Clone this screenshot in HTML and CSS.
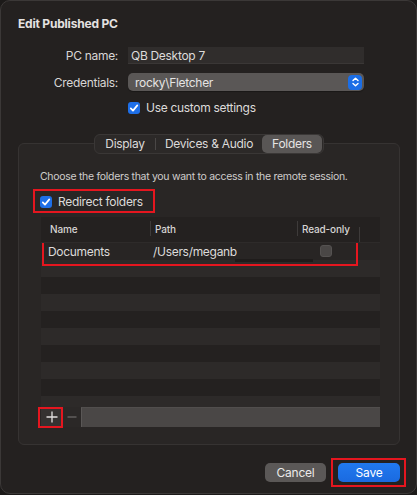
FILE: index.html
```html
<!DOCTYPE html>
<html lang="en">
<head>
  <meta charset="UTF-8" />
  <meta name="viewport" content="width=device-width, initial-scale=1" />
  <title>Edit Published PC</title>
  <link rel="stylesheet" href="styles.css">
</head>
<body>

  <div class="window">
    <h1 class="title">Edit Published PC</h1>

    <div class="form">
      <label class="form-label">PC name:</label>
      <div class="text-field">QB Desktop 7</div>

      <label class="form-label">Credentials:</label>
      <div class="popup-btn">
        <span>rocky\Fletcher</span>
        <span class="stepper">
          <svg width="13" height="14" viewBox="0 0 13 14"><path d="M4 5.6 L6.5 3.2 L9 5.6 M4 8.4 L6.5 10.8 L9 8.4" fill="none" stroke="#fff" stroke-width="1.4" stroke-linecap="round" stroke-linejoin="round"/></svg>
        </span>
      </div>

      <span></span>
      <label class="check-row">
        <span class="checkbox on">
          <svg width="12" height="12" viewBox="0 0 12 12"><path d="M2.8 6.3 L5 8.6 L9.3 3.4" fill="none" stroke="#fff" stroke-width="1.7" stroke-linecap="round" stroke-linejoin="round"/></svg>
        </span>
        Use custom settings
      </label>
    </div>

    <div class="tabs">
      <div class="tab tab-display">Display</div>
      <div class="tab-sep"></div>
      <div class="tab tab-devices">Devices &amp; Audio</div>
      <div class="tab tab-folders active">Folders</div>
    </div>

    <div class="group">
      <p class="desc">Choose the folders that you want to access in the remote session.</p>

      <label class="check-row redirect mark mark-redirect">
        <span class="checkbox on">
          <svg width="12" height="12" viewBox="0 0 12 12"><path d="M2.8 6.3 L5 8.6 L9.3 3.4" fill="none" stroke="#fff" stroke-width="1.7" stroke-linecap="round" stroke-linejoin="round"/></svg>
        </span>
        Redirect folders
      </label>

      <div class="table">
        <div class="thead">
          <div class="th col-name">Name</div>
          <div class="th col-path">Path</div>
          <div class="th col-ro">Read-only</div>
          <div class="th col-rest"></div>
        </div>
        <div class="tbody">
          <div class="tr first mark mark-row">
            <div class="td col-name">Documents</div>
            <div class="td col-path">/Users/meganb<span class="edit-strip"></span></div>
            <div class="td col-ro"><span class="ro-box"></span></div>
          </div>
          <div class="tr alt"></div>
          <div class="tr"></div>
          <div class="tr alt"></div>
          <div class="tr"></div>
          <div class="tr alt"></div>
          <div class="tr"></div>
          <div class="tr alt"></div>
          <div class="tr"></div>
          <div class="tr alt"></div>
        </div>
        <div class="tbar">
          <button class="tbar-btn plus mark mark-plus">
            <svg width="12" height="12" viewBox="0 0 12 12"><path d="M6 0.5 V11.5 M0.5 6 H11.5" stroke="#e2e0df" stroke-width="1.3"/></svg>
          </button>
          <button class="tbar-btn minus">
            <svg width="10" height="10" viewBox="0 0 10 10"><path d="M0.5 5 H9.5" stroke="#6a6766" stroke-width="1.3"/></svg>
          </button>
          <div class="tbar-fill"></div>
        </div>
      </div>
    </div>

    <div class="actions">
      <button class="btn cancel">Cancel</button>
      <button class="btn save mark mark-save">Save</button>
    </div>
  </div>

</body>
</html>
```

FILE: styles.css
```css
* {
  margin: 0;
  padding: 0;
  box-sizing: border-box;
}
html, body {
  width: 417px;
  height: 495px;
  background: #1c1a19;
  overflow: hidden;
}
body {
  font-family: Inter, "Liberation Sans", sans-serif;
  color: #dedcdb;
  font-size: 12px;
  letter-spacing: -0.3px;
}
.window {
  width: 417px;
  height: 494px;
  background: #242120;
  border: 1px solid #3b3837;
  border-radius: 10px;
  padding: 15px 16px 0 17px;
}
.title {
  font-size: 12px;
  font-weight: 700;
  line-height: 16px;
  color: #e4e2e1;
  letter-spacing: -0.2px;
}

/* form */
.form {
  display: grid;
  grid-template-columns: 100px 236px;
  column-gap: 10px;
  row-gap: 9px;
  margin-top: 15px;
  align-items: center;
}
.form-label {
  text-align: right;
  color: #d8d6d5;
}
.text-field {
  height: 17px;
  line-height: 17px;
  background: #302d2c;
  border-bottom: 1px solid #3a3736;
  padding-left: 3px;
  color: #dddbda;
}
.popup-btn {
  height: 18px;
  background: #5a5756;
  border-radius: 5px;
  display: flex;
  align-items: center;
  justify-content: space-between;
  padding: 0 2px 0 7px;
  color: #e6e4e3;
  box-shadow: 0 1px 1px rgba(0,0,0,0.3);
}
.stepper {
  width: 14px;
  height: 15px;
  background: #1b6ee6;
  border-radius: 4px;
  display: flex;
  align-items: center;
  justify-content: center;
}
.check-row {
  display: flex;
  align-items: center;
  gap: 6px;
  height: 15px;
  color: #dddbda;
}
.checkbox {
  width: 12px;
  height: 12px;
  border-radius: 3px;
  display: flex;
  align-items: center;
  justify-content: center;
}
.checkbox.on {
  background: #1e6fe8;
}

/* tabs */
.tabs {
  position: relative;
  z-index: 1;
  display: flex;
  align-items: center;
  width: 230px;
  height: 20px;
  margin: 19px auto 0;
  background: #2c2928;
  border: 1px solid #3a3736;
  border-radius: 6px;
  white-space: nowrap;
}
.tab {
  color: #dcdad9;
  line-height: 18px;
  height: 18px;
  text-align: center;
}
.tab-display { width: 60px; }
.tab-devices { width: 106px; }
.tab-folders { width: 60px; }
.tab-sep {
  width: 1px;
  height: 12px;
  background: #4a4746;
}
.tab.active {
  background: #595655;
  border-radius: 5px;
  color: #e6e4e3;
}

/* group box */
.group {
  margin-top: -11px;
  width: 382px;
  height: 302px;
  background: #292625;
  border: 1px solid #363332;
  border-radius: 6px;
  padding: 26px 20px 0 21px;
}
.desc {
  font-size: 10.5px;
  line-height: 14px;
  color: #cfcdcc;
  letter-spacing: -0.3px;
}
.redirect {
  display: inline-flex;
  margin-top: 10px;
}

/* red highlight boxes */
.mark {
  position: relative;
}
.mark::after {
  content: "";
  position: absolute;
  border: 2px solid #e5161f;
  pointer-events: none;
}
.mark-redirect::after {
  left: -7px;
  right: -12px;
  top: -5px;
  bottom: -4px;
}
.mark-row::after {
  left: 1px;
  right: 22px;
  top: -2px;
  bottom: -6px;
}
.mark-plus::after {
  left: -3px;
  right: -1px;
  top: 0;
  bottom: -1px;
}
.mark-save::after {
  left: -7px;
  right: -6px;
  top: -5px;
  bottom: -5px;
}

/* table */
.table {
  margin-top: 6px;
  width: 339px;
  margin-left: 1px;
  background: #242120;
}
.thead {
  display: flex;
  height: 26px;
  align-items: center;
  border-bottom: 1px solid #2e2b2a;
}
.th {
  position: relative;
  font-size: 10px;
  font-weight: 500;
  color: #d6d4d3;
  padding-left: 9px;
  letter-spacing: -0.15px;
}
.th.col-path { padding-left: 5px; }
.th.col-ro { padding-left: 5px; }
.th + .th::before {
  content: "";
  position: absolute;
  left: 0;
  top: -2px;
  width: 1px;
  height: 15px;
  background: #3e3b3a;
}
.col-name { width: 109px; }
.col-path { width: 147px; }
.col-ro { width: 62px; }
.col-rest { width: 21px; }
.tbody {
  height: 164px;
  overflow: hidden;
}
.tr {
  display: flex;
  align-items: center;
  height: 17px;
  background: #242120;
}
.tr.alt {
  background: #2d2a29;
}
.tr.first {
  background: #282524;
}
.td {
  color: #dddbda;
}
.td.col-name { padding-left: 7px; }
.td.col-path {
  position: relative;
  padding-left: 3px;
}
.edit-strip {
  position: absolute;
  left: 85px;
  top: 15px;
  width: 78px;
  height: 3px;
  background: #1f1c1b;
}
.td.col-ro {
  display: flex;
  padding-left: 23px;
}
.ro-box {
  width: 12px;
  height: 12px;
  border-radius: 3px;
  background: #4a4746;
  border: 1px solid #555251;
}
.tbar {
  display: flex;
  height: 20px;
  background: #2a2726;
}
.tbar-btn {
  border: none;
  display: flex;
  align-items: center;
  justify-content: center;
  height: 20px;
  font-family: inherit;
}
.tbar-btn.plus {
  width: 21px;
  background: #353231;
}
.tbar-btn.minus {
  width: 19px;
  background: #2b2827;
}
.tbar-fill {
  flex: 1;
  background: #4a4746;
  border-left: 1px solid #5a5756;
  border-top: 1px solid #514e4d;
}

/* footer buttons */
.actions {
  display: flex;
  justify-content: flex-end;
  gap: 12px;
  margin-top: 18px;
}
.btn {
  height: 19px;
  border: none;
  border-radius: 5px;
  font-family: inherit;
  font-size: 12px;
  letter-spacing: -0.2px;
  color: #ecebea;
}
.btn.cancel {
  width: 61px;
  background: #5b5857;
}
.btn.save {
  width: 62px;
  background: linear-gradient(#2179ef, #1a6ae0);
  color: #fff;
}
```
